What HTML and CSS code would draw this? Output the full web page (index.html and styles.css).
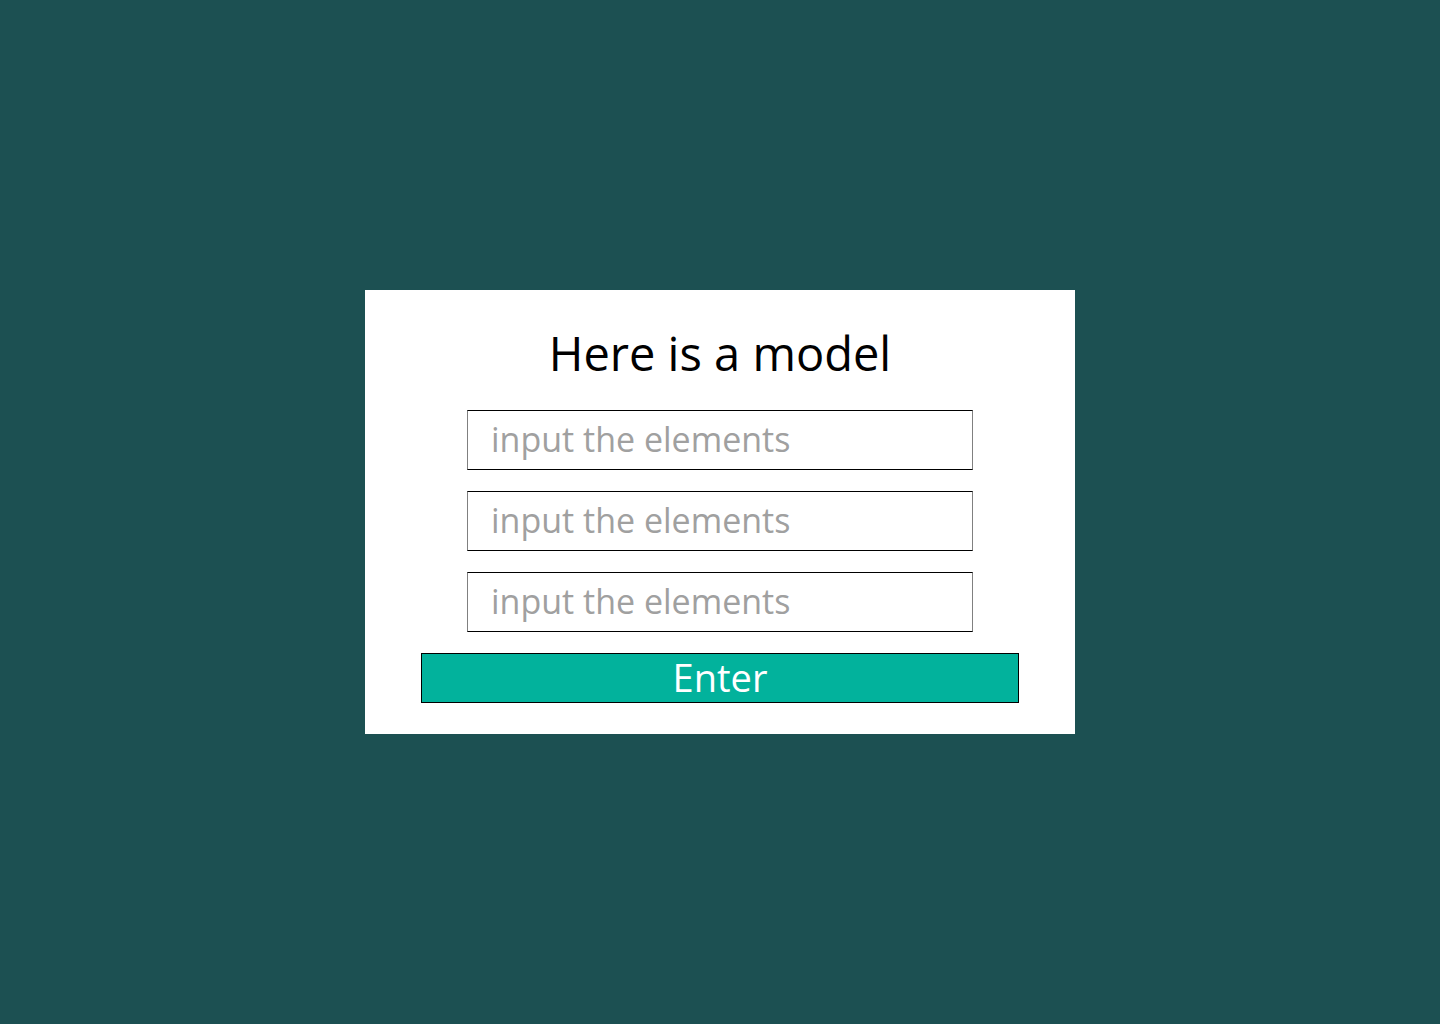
FILE: index.html
```html
<!DOCTYPE html>
<html lang="en">
<head>
<meta charset="utf-8">
<title>Here is a model</title>
<link rel="stylesheet" href="styles.css">
</head>
<body>
<main class="page">
  <form class="card">
    <h1 class="title">Here is a model</h1>
    <input class="field" type="text" placeholder="input the elements">
    <input class="field" type="text" placeholder="input the elements">
    <input class="field" type="text" placeholder="input the elements">
    <button class="enter" type="button">Enter</button>
  </form>
</main>
</body>
</html>
```
FILE: styles.css
```css
html, body {
  margin: 0;
  padding: 0;
  height: 100%;
}
body {
  background: #1c5052;
  font-family: "Open Sans", "Noto Sans", sans-serif;
}
.page {
  height: 100%;
  display: flex;
  align-items: center;
  justify-content: center;
}
.card {
  width: 710px;
  box-sizing: border-box;
  background: #ffffff;
  display: flex;
  flex-direction: column;
  align-items: center;
  padding: 30px 0 31px;
}
.title {
  margin: 0 0 24px;
  height: 66px;
  line-height: 66px;
  font-size: 47px;
  font-weight: 400;
  color: #000;
}
.field {
  box-sizing: border-box;
  width: 506px;
  height: 60px;
  margin: 0 0 21px;
  padding: 0 0 2px 23px;
  border: 1px solid #000;
  border-left-color: #808080;
  border-right-color: #808080;
  border-radius: 0;
  background: #fff;
  font-family: inherit;
  font-size: 34px;
  color: #333;
  outline: none;
}
.field::placeholder {
  color: #a0a0a0;
}
.enter {
  box-sizing: border-box;
  width: 598px;
  height: 50px;
  margin: 0;
  padding: 0 0 2px;
  border: 1px solid #000;
  border-radius: 0;
  background: #02b29c;
  color: #fff;
  font-family: inherit;
  font-size: 38px;
  line-height: 46px;
  cursor: pointer;
}
```
